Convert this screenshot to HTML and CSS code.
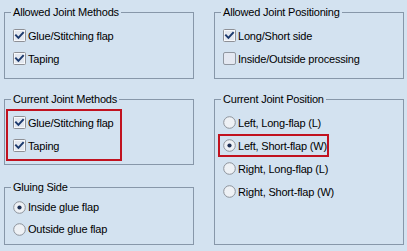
FILE: index.html
```html
<!DOCTYPE html>
<html>
<head>
<meta charset="utf-8">
<link rel="stylesheet" href="styles.css">
</head>
<body>
<div class="dlg">
  <div class="col">
    <fieldset class="grp g-top">
      <legend>Allowed Joint Methods</legend>
      <div class="list">
        <div class="row"><svg class="ic" viewBox="0 0 13 13"><rect x="0.5" y="0.5" width="12" height="12" rx="1" class="cb-box"/><rect x="2" y="2" width="9" height="9" class="cb-in"/><path d="M3 6.4 L5.4 8.9 L10 3.9" class="cb-chk"/></svg><span>Glue/Stitching flap</span></div>
        <div class="row"><svg class="ic" viewBox="0 0 13 13"><rect x="0.5" y="0.5" width="12" height="12" rx="1" class="cb-box"/><rect x="2" y="2" width="9" height="9" class="cb-in"/><path d="M3 6.4 L5.4 8.9 L10 3.9" class="cb-chk"/></svg><span>Taping</span></div>
      </div>
    </fieldset>
    <fieldset class="grp g-mid">
      <legend>Current Joint Methods</legend>
      <div class="hl hl-cb">
        <div class="row"><svg class="ic" viewBox="0 0 13 13"><rect x="0.5" y="0.5" width="12" height="12" rx="1" class="cb-box"/><rect x="2" y="2" width="9" height="9" class="cb-in"/><path d="M3 6.4 L5.4 8.9 L10 3.9" class="cb-chk"/></svg><span>Glue/Stitching flap</span></div>
        <div class="row"><svg class="ic" viewBox="0 0 13 13"><rect x="0.5" y="0.5" width="12" height="12" rx="1" class="cb-box"/><rect x="2" y="2" width="9" height="9" class="cb-in"/><path d="M3 6.4 L5.4 8.9 L10 3.9" class="cb-chk"/></svg><span>Taping</span></div>
      </div>
    </fieldset>
    <fieldset class="grp g-glue">
      <legend>Gluing Side</legend>
      <div class="list">
        <div class="row row-s"><svg class="ic" viewBox="0 0 13 13"><circle cx="6.5" cy="6.5" r="5.8" class="rd"/><circle cx="6.5" cy="6.5" r="2.1" class="rd-dot"/></svg><span>Inside glue flap</span></div>
        <div class="row row-s"><svg class="ic" viewBox="0 0 13 13"><circle cx="6.5" cy="6.5" r="5.8" class="rd"/></svg><span>Outside glue flap</span></div>
      </div>
    </fieldset>
  </div>
  <div class="col">
    <fieldset class="grp g-top">
      <legend>Allowed Joint Positioning</legend>
      <div class="list">
        <div class="row"><svg class="ic" viewBox="0 0 13 13"><rect x="0.5" y="0.5" width="12" height="12" rx="1" class="cb-box"/><rect x="2" y="2" width="9" height="9" class="cb-in"/><path d="M3 6.4 L5.4 8.9 L10 3.9" class="cb-chk"/></svg><span>Long/Short side</span></div>
        <div class="row"><svg class="ic" viewBox="0 0 13 13"><rect x="0.5" y="0.5" width="12" height="12" rx="1.5" class="cb-off"/></svg><span>Inside/Outside processing</span></div>
      </div>
    </fieldset>
    <fieldset class="grp g-pos">
      <legend>Current Joint Position</legend>
      <div class="list">
        <div class="row"><svg class="ic" viewBox="0 0 13 13"><circle cx="6.5" cy="6.5" r="5.8" class="rd"/></svg><span>Left, Long-flap (L)</span></div>
        <div class="row hl hl-rd"><svg class="ic" viewBox="0 0 13 13"><circle cx="6.5" cy="6.5" r="5.8" class="rd"/><circle cx="6.5" cy="6.5" r="2.1" class="rd-dot"/></svg><span>Left, Short-flap (W)</span></div>
        <div class="row"><svg class="ic" viewBox="0 0 13 13"><circle cx="6.5" cy="6.5" r="5.8" class="rd"/></svg><span>Right, Long-flap (L)</span></div>
        <div class="row"><svg class="ic" viewBox="0 0 13 13"><circle cx="6.5" cy="6.5" r="5.8" class="rd"/></svg><span>Right, Short-flap (W)</span></div>
      </div>
    </fieldset>
  </div>
</div>
</body>
</html>
```
FILE: styles.css
```css
html, body {
  margin: 0;
  padding: 0;
}
body {
  background: #d3e2f0;
  font-family: "Liberation Sans", Arial, sans-serif;
  font-size: 11px;
  letter-spacing: -0.2px;
  color: #000;
}
.dlg {
  display: grid;
  grid-template-columns: 190px 190px;
  column-gap: 20px;
  padding: 6px 0 0 4px;
  width: 407px;
  height: 251px;
  box-sizing: border-box;
  align-items: start;
}
.col {
  display: flex;
  flex-direction: column;
  align-self: stretch;
  height: 239px;
}
.grp {
  margin: 0;
  padding: 0;
  border: 1px solid #8797a9;
  min-width: 0;
}
.grp legend {
  margin-left: 6px;
  padding: 0 2px;
  line-height: 13px;
  height: 13px;
}
.g-top {
  padding-bottom: 8px;
}
.g-top .list {
  margin-top: 5px;
}
.g-mid {
  margin-top: 14px;
  padding-bottom: 3px;
}
.g-glue {
  margin-top: 16px;
  padding-bottom: 4px;
}
.g-glue .list {
  margin-top: 2px;
}
.g-pos {
  margin-top: 14px;
  flex: 1;
}
.g-pos .list {
  margin-top: 5px;
}
.row {
  display: flex;
  align-items: center;
  height: 23px;
  padding-left: 8px;
  white-space: nowrap;
}
.row-s {
  height: 22px;
}
.ic {
  width: 13px;
  height: 13px;
  flex: none;
  margin-right: 2px;
}
.cb-box {
  fill: #f6f8fb;
  stroke: #8e9096;
  stroke-width: 1;
}
.cb-in {
  fill: #e3e8f0;
}
.cb-chk {
  fill: none;
  stroke: #1c3a6e;
  stroke-width: 2;
  stroke-linecap: square;
}
.cb-off {
  fill: #e4e8f1;
  stroke: #9097a1;
  stroke-width: 1;
}
.rd {
  fill: #eef1f5;
  stroke: #8d939b;
  stroke-width: 1;
}
.rd-dot {
  fill: #1b2e55;
}
.hl {
  border: 2px solid #c1121f;
  box-sizing: border-box;
}
.hl-cb {
  margin: 3px 0 0 1px;
  width: 116px;
  padding-bottom: 2px;
}
.hl-cb .row {
  padding-left: 5px;
}
.hl-rd {
  margin-left: 3px;
  width: 111px;
  padding-left: 3px;
  height: 23px;
}
```
